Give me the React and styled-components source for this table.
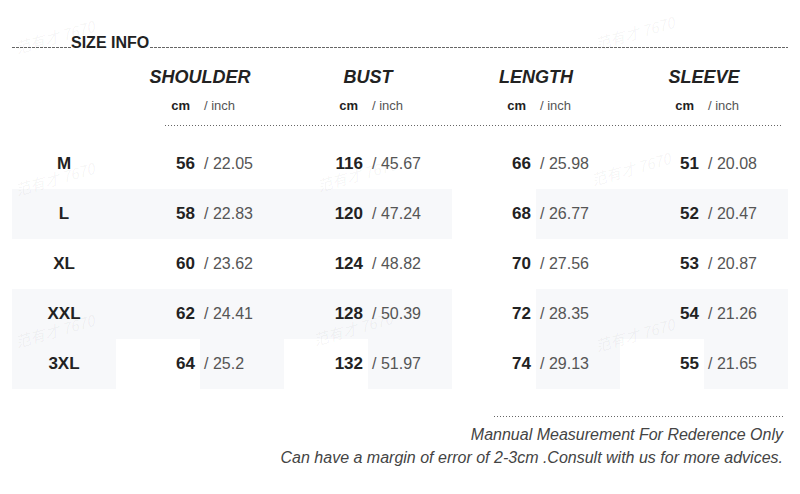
import React from 'react';
import styled, { createGlobalStyle } from 'styled-components';

const GlobalStyle = createGlobalStyle`
    html, body {
        margin: 0;
        padding: 0;
        background: #fff;
    }
    body {
        font-family: "Liberation Sans", Arial, sans-serif;
        color: #222;
    }
`;

const Page = styled.div`
    position: relative;
    width: 800px;
    height: 494px;
    padding: 33px 12px 0;
    box-sizing: border-box;
    overflow: hidden;
`;

const TitleBar = styled.div`
    display: flex;
    align-items: baseline;
    height: 20px;
`;

const Dashes = styled.div`
    height: 1px;
    margin-bottom: 1px;
    flex: ${({grow}) => grow ? 1 : 'none'};
    width: ${({width}) => width ? width + 'px' : 'auto'};
    background-image: linear-gradient(to right, #666 3px, transparent 3px);
    background-size: 4px 1px;
    background-repeat: repeat-x;
`;

const Title = styled.div`
    font-size: 16px;
    font-weight: bold;
    line-height: 20px;
    color: #222;
    padding-right: 1px;
`;

const Grid = styled.div`
    display: grid;
    grid-template-columns: 104px repeat(8, 84px);
`;

const HeadRow = styled(Grid)`
    margin-top: 12px;
    height: 24px;
`;

const HeadCell = styled.div`
    grid-column: span 2;
    text-align: center;
    font-size: 18px;
    font-weight: bold;
    font-style: italic;
    line-height: 24px;
    color: #222;
`;

const UnitRow = styled(Grid)`
    margin-top: 6px;
    height: 22px;
    line-height: 22px;
`;

const UnitCm = styled.div`
    text-align: right;
    padding-right: 10px;
    font-size: 13px;
    font-weight: bold;
    color: #222;
`;

const UnitInch = styled.div`
    padding-left: 4px;
    font-size: 13px;
    color: #555;
`;

const Dotted = styled.div`
    height: 1px;
    margin: ${({m}) => m};
    width: ${({width}) => width}px;
    background-image: linear-gradient(to right, #666 1px, transparent 1px);
    background-size: 3px 1px;
    background-repeat: repeat-x;
`;

const Rows = styled.div`
    margin-top: 13px;
`;

const DataRow = styled(Grid)`
    height: 50px;
    line-height: 50px;
`;

const Cell = styled.div`
    background: ${({shaded}) => shaded ? '#f7f8fa' : 'transparent'};
`;

const SizeCell = styled(Cell)`
    text-align: center;
    font-size: 17px;
    font-weight: bold;
    color: #222;
`;

const CmCell = styled(Cell)`
    text-align: right;
    padding-right: 5px;
    font-size: 17px;
    font-weight: bold;
    color: #222;
`;

const InchCell = styled(Cell)`
    padding-left: 4px;
    font-size: 16px;
    color: #555;
`;

const Footer = styled.div`
    display: flex;
    flex-direction: column;
    align-items: flex-end;
    padding-right: 5px;
    margin-top: 27px;
`;

const Note = styled.div`
    font-size: 16px;
    font-style: italic;
    line-height: 23px;
    color: #444;
    white-space: nowrap;
`;

const Watermark = styled.div`
    position: absolute;
    font-family: "Noto Sans CJK SC", sans-serif;
    font-size: 15px;
    font-style: italic;
    color: rgba(0, 0, 0, 0.05);
    transform: rotate(-16deg);
    white-space: nowrap;
    pointer-events: none;
`;

const columns = ['SHOULDER', 'BUST', 'LENGTH', 'SLEEVE'];

const g = true;
const w = false;

const rows = [
    { size: 'M', vals: [['56', '22.05'], ['116', '45.67'], ['66', '25.98'], ['51', '20.08']], shade: [w, w, w, w, w, w, w, w, w] },
    { size: 'L', vals: [['58', '22.83'], ['120', '47.24'], ['68', '26.77'], ['52', '20.47']], shade: [g, g, g, g, g, w, g, g, g] },
    { size: 'XL', vals: [['60', '23.62'], ['124', '48.82'], ['70', '27.56'], ['53', '20.87']], shade: [w, w, w, w, w, w, w, w, w] },
    { size: 'XXL', vals: [['62', '24.41'], ['128', '50.39'], ['72', '28.35'], ['54', '21.26']], shade: [g, g, g, g, g, w, g, g, g] },
    { size: '3XL', vals: [['64', '25.2'], ['132', '51.97'], ['74', '29.13'], ['55', '21.65']], shade: [g, w, g, w, g, w, g, w, g] },
];

const marks = [
    [14, 26], [594, 22], [14, 168], [316, 164], [590, 158], [14, 320], [312, 318], [594, 324]
];

const App = () => (
    <>
        <GlobalStyle />
        <Page>
            {marks.map(([x, y], i) => (
                <Watermark key={'wm' + i} style={{ left: x, top: y }}>范有才 7670</Watermark>
            ))}
            <TitleBar>
                <Dashes width={59} />
                <Title>SIZE INFO</Title>
                <Dashes grow />
            </TitleBar>
            <HeadRow>
                <div />
                {columns.map((c) => <HeadCell key={c}>{c}</HeadCell>)}
            </HeadRow>
            <UnitRow>
                <div />
                {columns.map((c) => (
                    <React.Fragment key={'u' + c}>
                        <UnitCm>cm</UnitCm>
                        <UnitInch>/ inch</UnitInch>
                    </React.Fragment>
                ))}
            </UnitRow>
            <Dotted width={618} m="8px 0 0 153px" />
            <Rows>
                {rows.map((r) => (
                    <DataRow key={r.size}>
                        <SizeCell shaded={r.shade[0]}>{r.size}</SizeCell>
                        {r.vals.map(([cm, inch], j) => (
                            <React.Fragment key={r.size + j}>
                                <CmCell shaded={r.shade[1 + j * 2]}>{cm}</CmCell>
                                <InchCell shaded={r.shade[2 + j * 2]}>/ {inch}</InchCell>
                            </React.Fragment>
                        ))}
                    </DataRow>
                ))}
            </Rows>
            <Footer>
                <Dotted width={291} m="0 -2px 6px 0" />
                <Note>Mannual Measurement For Rederence Only</Note>
                <Note>Can have a margin of error of 2-3cm .Consult with us for more advices.</Note>
            </Footer>
        </Page>
    </>
);

export default App;
